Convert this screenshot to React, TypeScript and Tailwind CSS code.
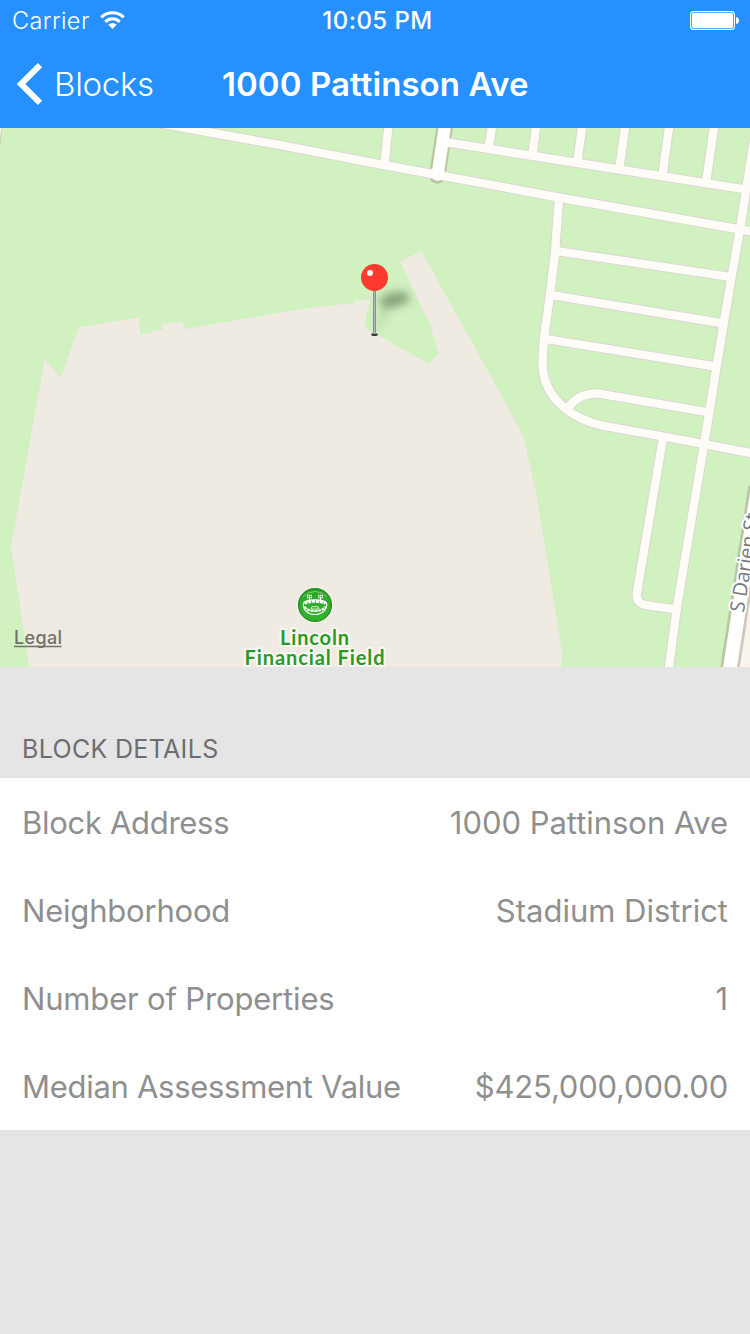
import React from "react";

const rows: [string, string, string, string][] = [
  ["Block Address", "1000 Pattinson Ave", "tracking-[-0.3px]", "tracking-[-0.03px]"],
  ["Neighborhood", "Stadium District", "tracking-[-0.2px]", "tracking-[0px]"],
  ["Number of Properties", "1", "tracking-[-0.17px]", "tracking-[0px]"],
  ["Median Assessment Value", "$425,000,000.00", "tracking-[-0.29px]", "tracking-[-0.2px]"],
];

const roads = [
  "M389 120L384.5 164",
  "M493 120L489 146",
  "M537 120L532.5 154",
  "M583 120L577.5 161",
  "M626 120L619.5 168",
  "M670 120L662.5 175",
  "M715 120L706 183",
  "M448 142.5L746 189.5",
  "M150 121.5L185 128L280 145L375 163.3L558 197.3L740 229.3L760 233",
  "M754 140L740 229.3L731.5 277L716.5 367L704 445L677 607L668 674",
  "M559 198L555 253L549.7 297L544 338Q542.6 352 542.7 367Q544 392 567 410Q580 420 602 425.5L663 436.5L704 444L760 455",
  "M567 410Q577 393 598 393.5L707 412",
  "M556 251L731 277",
  "M551 295L723 323.3",
  "M546 339L716 366.7",
  "M663 438L637 592Q635 604 648 605.5L677 609.5",
];

function MapView() {
  return (
    <svg viewBox="0 128 750 539" className="block h-[539px] w-full bg-[#d1f1c1]">
      <defs>
        <filter id="soft" x="-50%" y="-50%" width="200%" height="200%">
          <feGaussianBlur stdDeviation="4" />
        </filter>
        <linearGradient id="badge" x1="0" y1="0" x2="0" y2="1">
          <stop offset="0" stopColor="#2ea32a" />
          <stop offset="1" stopColor="#35b42d" />
        </linearGradient>
      </defs>
      <path d="M29.3 668L11 547L44.7 359.3L60.7 377.3L79 327.3L139 317.3L140 334.7L163 329.3L162.3 323.7L183 321.7L184 329.3L233 320.7L300 309.3L355 302.7V300L370.7 300.7L367.3 310L364.3 327.3L428.3 364L438.7 353.3L430 325L400 261.7L421 250.7L504 400L523.3 436.7L535.7 490L562.3 653.3L561 668Z" fill="#efeae2" />
      <path d="M0 128H2.3L0 148Z" fill="#c9cfba" />
      <path d="M0 128H1.6L0 138Z" fill="#f4f1ea" />
      <g fill="none" strokeLinejoin="round">
        <path d="M446.1 118L437.3 175.3" stroke="#b9c6a0" strokeWidth="16.4" strokeLinecap="round" />
        <g stroke="#d9d8d0" strokeWidth="10.3">{roads.map((d) => <path key={d} d={d} />)}</g>
        <g stroke="#fffcf7" strokeWidth="8.3">{roads.map((d) => <path key={d} d={d} />)}</g>
        <path d="M446.1 118L437.6 174.7" stroke="#fff" strokeWidth="12.2" strokeLinecap="round" />
      </g>
      <path d="M757 487H800V668H729Z" fill="#f9f4ec" />
      <path d="M728.7 672L757.2 487" stroke="#b9c6a0" strokeWidth="18" />
      <path d="M737.5 672L766 487" stroke="#d0c7bb" strokeWidth="3" />
      <path d="M729.3 672L757.8 487" stroke="#fff" strokeWidth="13.8" />
      <text transform="translate(743.8 613) rotate(-81)" fontSize="20" fontFamily="Open Sans, sans-serif" fill="#787878" stroke="#fff" strokeWidth="4" strokeLinejoin="round" paintOrder="stroke" textLength="100">S Darien St</text>
      <g filter="url(#soft)" fill="#3c5a38">
        <ellipse cx="394.5" cy="299.5" rx="15.5" ry="7.5" opacity=".5" transform="rotate(-10 395 299)" />
        <path d="M374 336L384 305L390 307Z" opacity=".25" />
      </g>
      <ellipse cx="374.5" cy="334.5" rx="3.3" ry="1.6" fill="#37373a" />
      <path d="M374.5 290V334" stroke="#89898d" strokeWidth="3" />
      <path d="M374.5 290V334" stroke="#b3b3b7" strokeWidth="1.4" />
      <circle cx="374.5" cy="277.5" r="13.5" fill="#ff3b30" />
      <circle cx="370" cy="273" r="3" fill="#fff" />
      <circle cx="315" cy="605" r="18" fill="#f8f5f0" />
      <circle cx="315" cy="605" r="16.4" fill="url(#badge)" stroke="#218c22" strokeWidth="1.3" />
      <path d="M303 596.5Q315 586.5 327 596.5" fill="none" stroke="#77cb70" strokeWidth="1" />
      <g fill="none" stroke="#fff">
        <path d="M303.3 604C303.3 598.5 326.7 598.5 326.7 604C327 610 322 614.5 315 614.5S303 610 303.3 604Z" strokeWidth="1.1" />
        <path d="M304.8 603.8C307 600.5 323 600.5 325.2 603.8" strokeWidth="2.8" strokeDasharray="3.2 .7" />
        <path d="M304.8 606.5C306.5 612.5 323.5 612.5 325.2 606.5" strokeWidth="2.2" strokeDasharray="3 .7" />
        <path d="M311 609L312 606.7H318L319 609Z" strokeWidth=".8" />
        <path d="M309.5 597V601M320.5 597V601" strokeWidth="1" />
        <path d="M307.2 595.5H312M307.2 597.5H312M318.2 595.5H323M318.2 597.5H323" strokeWidth="1.4" strokeDasharray="1.3 .5" />
      </g>
      <g fontFamily="Lato, sans-serif" fontWeight="700" fontSize="20" fill="#279b27" stroke="#fbf8f4" strokeWidth="4" strokeLinejoin="round" paintOrder="stroke" textAnchor="middle">
        <text x="314.5" y="645" textLength="69">Lincoln</text>
        <text x="314.5" y="665" textLength="140">Financial Field</text>
      </g>
      <text x="14" y="644" fontFamily="Inter, sans-serif" fontWeight="500" fontSize="18" fill="#72706c" textLength="48">Legal</text>
      <path d="M14 646.5H61.5" stroke="#72706c" strokeWidth="1.6" />
    </svg>
  );
}

export default function App() {
  return (
    <div className="flex h-[1334px] w-[750px] flex-col overflow-hidden bg-[#e5e5e5] font-['Inter',sans-serif]">
      <header className="h-32 bg-[#2690ff] text-white">
        <div className="grid h-10 grid-cols-3 items-center pl-3 pr-[11px]">
          <div className="flex items-center gap-[11px]">
            <span className="w-[77px] pt-0.5 text-[23.5px] leading-[38px] font-light tracking-[0.4px]">Carrier</span>
            <svg width="25" height="19" viewBox="0 0 25 19">
              <g fill="none" stroke="#fff" strokeWidth="3.1">
                <path d="M1.3 6.3A16 16 0 0 1 23.7 6.3" />
                <path d="M5.3 10.8A10.2 10.2 0 0 1 19.7 10.8" />
              </g>
              <path d="M12.5 18L8.3 13.7A6 6 0 0 1 16.7 13.7Z" fill="#fff" />
            </svg>
          </div>
          <span className="pt-0.5 pl-1 text-center text-[24px] leading-[38px] font-medium tracking-[0.45px] whitespace-nowrap">10:05 PM</span>
          <svg className="justify-self-end" width="49" height="19" viewBox="0 0 49 19">
            <rect x=".6" y=".6" width="43.8" height="17.8" rx="3" fill="none" stroke="#fff" strokeWidth="1.1" />
            <rect x="2" y="2" width="41" height="15" rx="1.8" fill="#fff" />
            <path d="M46 6Q49 6.5 49 9.5T46 13Z" fill="#fff" />
          </svg>
        </div>
        <div className="flex h-[88px] items-center">
          <svg className="ml-4 shrink-0" width="27" height="42" viewBox="0 0 27 42">
            <path d="M24 2.2L5 21L24 39.8" fill="none" stroke="#fff" strokeWidth="6" />
          </svg>
          <span className="ml-[11px] w-[168px] pt-0.5 text-[33px] font-light tracking-[-0.3px]">Blocks</span>
          <h1 className="pt-0.5 text-[33px] font-semibold tracking-[0.07px] whitespace-nowrap">1000 Pattinson Ave</h1>
        </div>
      </header>
      <MapView />
      <h2 className="flex h-[111px] items-end px-[22px] pb-[13px] text-[25px] leading-8 tracking-[0.33px] text-[#6d6d72]">BLOCK DETAILS</h2>
      <dl className="bg-white text-[31px] text-[#8f8f8f]">
        {rows.map(([label, value, lt, vt]) => (
          <div key={label} className="flex h-[88px] items-center justify-between px-[22px] pt-[3px]">
            <dt className={lt}>{label}</dt>
            <dd className={vt}>{value}</dd>
          </div>
        ))}
      </dl>
    </div>
  );
}
